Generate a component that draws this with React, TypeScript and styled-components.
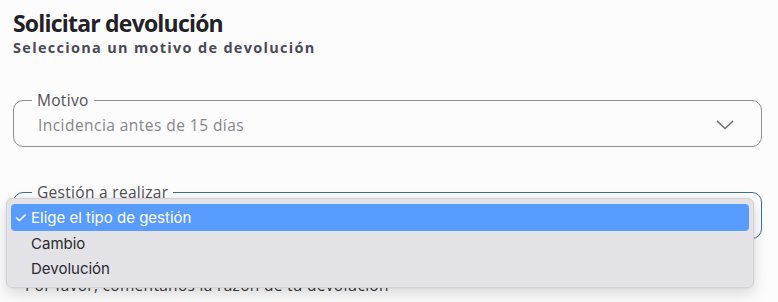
import React from "react";
import styled, { createGlobalStyle } from "styled-components";

const GlobalStyle = createGlobalStyle`
  html, body {
    margin: 0;
    padding: 0;
    background: #fdfcfd;
    font-family: "Open Sans", "Noto Sans", sans-serif;
  }
`;

const SPage = styled.div`
  position: relative;
  width: 778px;
  height: 302px;
  overflow: hidden;
  padding: 9px 16px 0 13px;
  box-sizing: border-box;
  background: #fdfcfd;
`;

const STitle = styled.h1`
  margin: 0;
  font-size: 23px;
  font-weight: 700;
  line-height: 29px;
  color: #222226;
  letter-spacing: -0.8px;
`;

const SSubtitle = styled.h2`
  margin: 0;
  font-size: 14.5px;
  font-weight: 700;
  line-height: 20px;
  color: #4a4a55;
  letter-spacing: 1.3px;
`;

interface FieldProps {
  focused?: boolean;
}

const SField = styled.fieldset<FieldProps>`
  position: relative;
  margin: ${({ focused }) => (focused ? "36px 0 0" : "33px 0 0")};
  padding: 0 18px;
  height: 56px;
  box-sizing: border-box;
  border-style: solid;
  border-color: ${({ focused }) => (focused ? "#3e7282" : "#8d8d92")};
  border-width: ${({ focused }) => (focused ? "1.5px" : "1px")};
  border-radius: 10px;
  display: flex;
  align-items: center;
`;

const SLegend = styled.legend`
  padding: 0 5px;
  font-size: 15.5px;
  line-height: 18px;
  letter-spacing: 0.3px;
  color: #4f4f56;
`;

const SValue = styled.div`
  flex: 1;
  margin-top: -5px;
  padding-left: 6px;
  font-size: 15.5px;
  letter-spacing: 0.45px;
  color: #85858b;
`;

const SChevron = styled.svg`
  margin-top: -6px;
  margin-right: 9px;
`;

const SHint = styled.p`
  margin: 36px 0 0 12px;
  font-size: 15.5px;
  line-height: 20px;
  letter-spacing: 0.3px;
  color: #3a3a40;
`;

const SMenu = styled.ul`
  position: absolute;
  left: 6px;
  top: 198px;
  width: 748px;
  box-sizing: border-box;
  margin: 0;
  padding: 5px 4px 6px;
  list-style: none;
  background: #e3e2e7;
  border: 1px solid #d3d2d6;
  border-radius: 6px;
  box-shadow: 0 6px 16px rgba(0, 0, 0, 0.14), 0 0 3px rgba(0, 0, 0, 0.06);
  font-family: Inter, "Liberation Sans", sans-serif;
  font-size: 15px;
`;

interface ItemProps {
  selected?: boolean;
}

const SItem = styled.li<ItemProps>`
  height: ${({ selected }) => (selected ? "27px" : "25px")};
  display: flex;
  align-items: center;
  padding-left: ${({ selected }) => (selected ? "3px" : "20px")};
  border-radius: 4px;
  color: ${({ selected }) => (selected ? "#ffffff" : "#2a2a2e")};
  background: ${({ selected }) => (selected ? "#589cfe" : "transparent")};
`;

const SCheck = styled.span`
  width: 17px;
  font-size: 15px;
`;

const options = ["Elige el tipo de gestión", "Cambio", "Devolución"];

const App = () => {
  return (
    <SPage>
      <GlobalStyle />
      <STitle>Solicitar devolución</STitle>
      <SSubtitle>Selecciona un motivo de devolución</SSubtitle>
      <SField>
        <SLegend>Motivo</SLegend>
        <SValue>Incidencia antes de 15 días</SValue>
        <SChevron width="18" height="10" viewBox="0 0 18 10">
          <path d="M1 1 L9 8.5 L17 1" fill="none" stroke="#6f6f75" strokeWidth="1.6" />
        </SChevron>
      </SField>
      <SField focused>
        <SLegend>Gestión a realizar</SLegend>
      </SField>
      <SHint>Por favor, coméntanos la razón de tu devolución</SHint>
      <SMenu>
        {options.map((option, i) => (
          <SItem key={option} selected={i === 0}>
            {i === 0 && <SCheck>✓</SCheck>}
            {option}
          </SItem>
        ))}
      </SMenu>
    </SPage>
  );
};

export default App;
